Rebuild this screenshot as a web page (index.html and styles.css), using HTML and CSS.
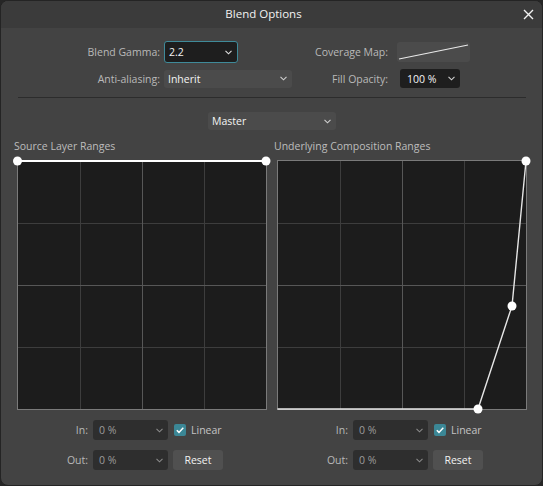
FILE: index.html
```html
<!DOCTYPE html>
<html>
<head>
<meta charset="utf-8">
<title>Blend Options</title>
<link rel="stylesheet" href="styles.css">
</head>
<body>
<div class="window">
  <header class="titlebar">
    <span class="spacer"></span>
    <h1 class="title">Blend Options</h1>
    <button class="close" aria-label="Close">
      <svg width="11" height="11" viewBox="0 0 11 11"><path d="M1 1 L10 10 M10 1 L1 10" stroke="#f2f2f2" stroke-width="1.4" fill="none"/></svg>
    </button>
  </header>

  <section class="settings">
    <span class="lbl">Blend Gamma:</span>
    <div class="select dark focus w-gamma"><span class="val">2.2</span><svg class="chev" width="7" height="5" viewBox="0 0 7 5"><path d="M0.5 0.8 L3.5 3.8 L6.5 0.8" stroke="#e0e0e0" stroke-width="1.1" fill="none"/></svg></div>
    <span class="lbl lbl-right">Coverage Map:</span>
    <div class="coverage"><svg width="73" height="20" viewBox="0 0 73 20"><path d="M2 17 L71 3" stroke="#e8e8e8" stroke-width="1.2" fill="none"/></svg></div>

    <span class="lbl">Anti-aliasing:</span>
    <div class="select mid w-aa"><span class="val">Inherit</span><svg class="chev" width="7" height="5" viewBox="0 0 7 5"><path d="M0.5 0.8 L3.5 3.8 L6.5 0.8" stroke="#d0d0d0" stroke-width="1.1" fill="none"/></svg></div>
    <span class="lbl lbl-right">Fill Opacity:</span>
    <div class="select dark w-fill"><span class="val pad-fill">100 %</span><svg class="chev" width="7" height="5" viewBox="0 0 7 5"><path d="M0.5 0.8 L3.5 3.8 L6.5 0.8" stroke="#d0d0d0" stroke-width="1.1" fill="none"/></svg></div>
  </section>

  <hr class="divider">

  <div class="channel-row">
    <div class="select mid w-master"><span class="val">Master</span><svg class="chev" width="7" height="5" viewBox="0 0 7 5"><path d="M0.5 0.8 L3.5 3.8 L6.5 0.8" stroke="#d0d0d0" stroke-width="1.1" fill="none"/></svg></div>
  </div>

  <div class="ranges">
    <div class="range">
      <div class="range-title">Source Layer Ranges</div>
      <div class="graph">
        <svg class="graph-svg" width="250" height="250" viewBox="0 0 250 250">
          <rect x="0.5" y="0.5" width="249" height="249" fill="#1c1c1c" stroke="#7a7a7a" stroke-width="1"/>
          <path d="M63.5 1 V249 M187.5 1 V249 M1 63.5 H249 M1 187.5 H249" stroke="#3d3d3d" stroke-width="1"/>
          <path d="M125.5 1 V249 M1 125.5 H249" stroke="#575757" stroke-width="1"/>
          <path d="M0.5 1 H249.5" stroke="#ffffff" stroke-width="2"/>
          <circle cx="0.5" cy="1" r="4.5" fill="#ffffff"/>
          <circle cx="249" cy="1" r="4.5" fill="#ffffff"/>
        </svg>
      </div>
      <div class="controls">
        <span class="lbl">In:</span>
        <div class="select low"><span class="val dim">0 %</span><svg class="chev" width="7" height="5" viewBox="0 0 7 5"><path d="M0.5 0.8 L3.5 3.8 L6.5 0.8" stroke="#8a8a8a" stroke-width="1.1" fill="none"/></svg></div>
        <label class="check"><span class="box"><svg width="12" height="12" viewBox="0 0 12 12"><path d="M2.8 6.2 L5 8.4 L9.3 3.8" stroke="#ffffff" stroke-width="1.5" fill="none"/></svg></span><span class="check-text">Linear</span></label>
        <span class="lbl">Out:</span>
        <div class="select low"><span class="val dim">0 %</span><svg class="chev" width="7" height="5" viewBox="0 0 7 5"><path d="M0.5 0.8 L3.5 3.8 L6.5 0.8" stroke="#8a8a8a" stroke-width="1.1" fill="none"/></svg></div>
        <button class="btn">Reset</button>
      </div>
    </div>

    <div class="range">
      <div class="range-title">Underlying Composition Ranges</div>
      <div class="graph">
        <svg class="graph-svg" width="250" height="250" viewBox="0 0 250 250">
          <rect x="0.5" y="0.5" width="249" height="249" fill="#1c1c1c" stroke="#7a7a7a" stroke-width="1"/>
          <path d="M63.5 1 V249 M187.5 1 V249 M1 63.5 H249 M1 187.5 H249" stroke="#3d3d3d" stroke-width="1"/>
          <path d="M125.5 1 V249 M1 125.5 H249" stroke="#575757" stroke-width="1"/>
          <path d="M0.5 249 H201 L235 146 L249 1" stroke="#e6e6e6" stroke-width="1.4" fill="none"/>
          <circle cx="201" cy="249" r="4.5" fill="#ffffff"/>
          <circle cx="235" cy="146" r="4.5" fill="#ffffff"/>
          <circle cx="249" cy="1" r="4.5" fill="#ffffff"/>
        </svg>
      </div>
      <div class="controls">
        <span class="lbl">In:</span>
        <div class="select low"><span class="val dim">0 %</span><svg class="chev" width="7" height="5" viewBox="0 0 7 5"><path d="M0.5 0.8 L3.5 3.8 L6.5 0.8" stroke="#8a8a8a" stroke-width="1.1" fill="none"/></svg></div>
        <label class="check"><span class="box"><svg width="12" height="12" viewBox="0 0 12 12"><path d="M2.8 6.2 L5 8.4 L9.3 3.8" stroke="#ffffff" stroke-width="1.5" fill="none"/></svg></span><span class="check-text">Linear</span></label>
        <span class="lbl">Out:</span>
        <div class="select low"><span class="val dim">0 %</span><svg class="chev" width="7" height="5" viewBox="0 0 7 5"><path d="M0.5 0.8 L3.5 3.8 L6.5 0.8" stroke="#8a8a8a" stroke-width="1.1" fill="none"/></svg></div>
        <button class="btn">Reset</button>
      </div>
    </div>
  </div>
</div>
</body>
</html>
```

FILE: styles.css
```css
* { box-sizing: border-box; }

html, body {
  margin: 0;
  padding: 0;
  background: #262626;
}

body {
  font-family: "Open Sans", "Noto Sans", sans-serif;
  font-size: 10.5px;
  color: #bcbcbc;
}

.window {
  width: 543px;
  height: 486px;
  background: #434343;
  border: 1px solid #242424;
  border-radius: 8px;
  overflow: hidden;
  display: flex;
  flex-direction: column;
}

.titlebar {
  height: 27px;
  background: #3b3b3b;
  display: grid;
  grid-template-columns: 1fr auto 1fr;
  align-items: center;
  flex: none;
}

.title {
  margin: 0 16px 0 0;
  font-size: 11.5px;
  font-weight: normal;
  color: #f2f2f2;
  line-height: 16px;
  padding-bottom: 1px;
}

.close {
  justify-self: end;
  margin-right: 7px;
  width: 13px;
  height: 13px;
  padding: 0;
  border: 0;
  background: transparent;
  display: flex;
  align-items: center;
  justify-content: center;
}

.settings {
  display: grid;
  grid-template-columns: 163px 128px 96px auto;
  grid-template-rows: 22px 19px;
  row-gap: 6px;
  padding-top: 13px;
  align-items: center;
  flex: none;
}

.settings .lbl {
  text-align: right;
  padding-right: 4px;
}

.settings .lbl-right {
  padding-right: 0;
}

.lbl {
  color: #b9b9b9;
  white-space: nowrap;
  line-height: 16px;
}

.select {
  display: flex;
  align-items: center;
  justify-content: space-between;
  border-radius: 3px;
  padding: 0 5px 0 4px;
  color: #f4f4f4;
  line-height: 16px;
}

.select .val { white-space: nowrap; }
.select .val.dim { color: #9c9c9c; padding-left: 2px; }
.select .val.pad-fill { padding-left: 3px; }

.select.dark { background: #1e1e1e; height: 19px; }
.select.mid { background: #4b4b4b; height: 18px; }
.select.low { background: #2e2e2e; height: 20px; }

.select.focus {
  height: 22px;
  border: 1px solid #3f8a99;
  padding-left: 4px;
}

.w-gamma { width: 74px; }
.w-aa { width: 128px; }
.w-fill { width: 60px; margin-left: 12px; }
.w-master { width: 128px; }

.coverage {
  width: 73px;
  height: 20px;
  background: #4b4b4b;
  border-radius: 3px;
  margin-left: 9px;
  display: flex;
}

.divider {
  margin: 9px 16px 0 17px;
  border: 0;
  height: 1px;
  background: #2c2c2c;
  flex: none;
}

.channel-row {
  display: flex;
  justify-content: center;
  margin-top: 14px;
  padding-left: 1px;
}

.ranges {
  display: grid;
  grid-template-columns: 250px 250px;
  column-gap: 10px;
  padding-left: 16px;
  margin-top: 8px;
}

.range {
  display: flex;
  flex-direction: column;
}

.range-title {
  line-height: 16px;
  color: #bdbdbd;
  margin-left: -3px;
  margin-bottom: 6px;
}

.graph {
  width: 250px;
  height: 250px;
}

.graph-svg {
  display: block;
  overflow: visible;
}

.controls {
  display: grid;
  grid-template-columns: 71px 75px auto;
  grid-template-rows: 20px 20px;
  column-gap: 5px;
  row-gap: 10px;
  margin-top: 10px;
  align-items: center;
}

.controls .lbl { text-align: right; }

.check {
  display: flex;
  align-items: center;
  gap: 5px;
  margin-left: 1px;
  color: #c4c4c4;
}

.box {
  width: 12px;
  height: 12px;
  background: #3b8796;
  border-radius: 2px;
  display: flex;
}

.btn {
  width: 50px;
  height: 20px;
  border: 0;
  border-radius: 3px;
  background: #505050;
  color: #f2f2f2;
  font-family: inherit;
  font-size: 10.5px;
  padding: 0;
  line-height: 16px;
}
```
